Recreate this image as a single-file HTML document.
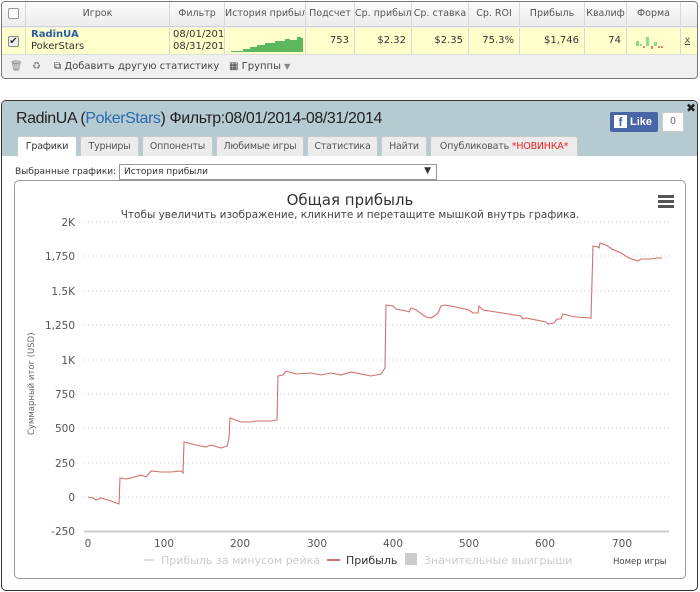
<!DOCTYPE html>
<html><head><meta charset="utf-8"><style>
*{box-sizing:border-box;margin:0;padding:0}
body{width:700px;height:592px;background:#fff;font-family:"Liberation Sans","DejaVu Sans",sans-serif;position:relative;overflow:hidden;font-size:11px;color:#333}
.top{position:absolute;left:1px;top:1px;width:697px;height:78px;border:1px solid #777;border-radius:4px;overflow:hidden;background:#f0f0f0}
.hdr{position:absolute;top:0;left:0;right:0;height:25px;background:linear-gradient(#fbfbfb,#ececec);border-bottom:1px solid #d0d0d0}
.row{position:absolute;top:26px;left:0;right:0;height:27px;background:#ffffcc;border-bottom:1px solid #ddd}
.c{position:absolute;top:0;height:100%;border-right:1px solid #d8d8d8;font-family:"DejaVu Sans",sans-serif;font-size:9.5px;color:#555;text-align:center;line-height:24px;white-space:nowrap;overflow:hidden}
.row .c{line-height:26px;font-size:10px;color:#333;text-align:right;padding-right:5px}
.tb{position:absolute;top:54px;left:0;right:0;height:24px;font-family:"DejaVu Sans",sans-serif;font-size:10px;color:#444}
.panel{position:absolute;left:1px;top:100px;width:697px;height:491px;border:1px solid #333;border-radius:5px;overflow:hidden;background:#fff}
.ph{position:absolute;left:0;top:0;right:0;height:55px;background:#b6cbd1}
.title{position:absolute;left:14px;top:9px;font-size:16px;color:#222;letter-spacing:-0.4px;font-family:"Liberation Sans",sans-serif}
.tab{position:absolute;top:35px;height:20px;background:#ececec;border:1px solid #c9c9c9;border-bottom:none;border-radius:3px 3px 0 0;font-family:"DejaVu Sans",sans-serif;font-size:9.5px;color:#555;text-align:center;line-height:19px;letter-spacing:-0.2px;white-space:nowrap;overflow:hidden}
.chart{position:absolute;left:12px;top:79px;width:672px;height:399px;border:1px solid #999;border-radius:5px}
</style></head><body>
<div class="top">
 <div class="hdr">
  <div class="c" style="left:0;width:24px"><div style="width:11px;height:11px;border:1px solid #999;border-radius:2px;margin:6px auto;background:#fff"></div></div>
  <div class="c" style="left:24px;width:144px">Игрок</div>
  <div class="c" style="left:168px;width:55px">Фильтр</div>
  <div class="c" style="left:223px;width:81px">История прибыль</div>
  <div class="c" style="left:304px;width:49px">Подсчет</div>
  <div class="c" style="left:353px;width:57px">Ср. прибыль</div>
  <div class="c" style="left:410px;width:57px">Ср. ставка</div>
  <div class="c" style="left:467px;width:51px">Ср. ROI</div>
  <div class="c" style="left:518px;width:65px">Прибыль</div>
  <div class="c" style="left:583px;width:42px">Квалиф</div>
  <div class="c" style="left:625px;width:54px">Форма</div>
 </div>
 <div class="row">
  <div class="c" style="left:0;width:24px;padding:0"><div style="width:11px;height:11px;border:1px solid #888;border-radius:2px;margin:8px auto;background:#eee;font-size:10px;line-height:9px;text-align:center">✔</div></div>
  <div class="c" style="left:24px;width:144px;text-align:left;padding-left:5px;line-height:12px;padding-top:1px"><b style="color:#2a5ea8">RadinUA</b><br>PokerStars</div>
  <div class="c" style="left:168px;width:55px;text-align:left;padding-left:3px;line-height:12px;padding-top:1px">08/01/201<br>08/31/201</div>
  <div class="c" style="left:223px;width:81px"><svg width="81" height="26" style="position:absolute;left:0;top:0"><path d="M6 23H18V21H25V19H32V17H40V15H50V13H60V11H65V12H72V9H76V10H78V24H6Z" fill="#5cb85c"/></svg></div>
  <div class="c" style="left:304px;width:49px">753</div>
  <div class="c" style="left:353px;width:57px">$2.32</div>
  <div class="c" style="left:410px;width:57px">$2.35</div>
  <div class="c" style="left:467px;width:51px">75.3%</div>
  <div class="c" style="left:518px;width:65px">$1,746</div>
  <div class="c" style="left:583px;width:42px">74</div>
  <div class="c" style="left:625px;width:54px"><svg width="54" height="26" style="position:absolute;left:0;top:0"><rect x="9" y="13" width="3" height="5" fill="#8d8"/><rect x="13" y="16" width="2" height="2" fill="#8d8"/><rect x="16" y="18" width="2" height="2" fill="#e77"/><rect x="19" y="9" width="3" height="9" fill="#8d8"/><rect x="24" y="18" width="2" height="3" fill="#e77"/><rect x="27" y="14" width="3" height="4" fill="#8d8"/><rect x="31" y="18" width="2" height="2" fill="#e77"/><rect x="34" y="18" width="2" height="2" fill="#e77"/></svg></div>
  <div style="position:absolute;left:683px;top:7px;font-size:10px;text-decoration:underline;color:#444">x</div>
 </div>
 <div class="tb">
  <span style="position:absolute;left:8px;top:5px;color:#888">🗑</span>
  <span style="position:absolute;left:30px;top:5px;color:#888">♻</span>
  <span style="position:absolute;left:52px;top:5px">⧉ Добавить другую статистику</span>
  <span style="position:absolute;left:227px;top:5px">▦ Группы <span style="color:#888;font-size:8px">▼</span></span>
 </div>
</div>
<div class="panel">
 <div class="ph">
  <div class="title">RadinUA (<span style="color:#2a6ab0">PokerStars</span>) Фильтр:08/01/2014-08/31/2014</div>
  <div style="position:absolute;left:608px;top:11px;width:48px;height:20px;background:#4865a8;border-radius:2px;color:#fff;font-weight:bold;font-size:11px;line-height:20px"><span style="display:inline-block;width:13px;height:13px;background:#fff;color:#4865a8;margin:3px 3px 0 4px;vertical-align:top;text-align:center;line-height:14px;font-size:12px">f</span>Like</div>
  <div style="position:absolute;left:660px;top:11px;width:22px;height:20px;background:#fff;border:1px solid #ccc;border-radius:2px;font-size:10px;text-align:center;line-height:18px;color:#666">0</div>
  <div style="position:absolute;left:684px;top:0;font-size:12px;font-weight:bold;color:#222">✖</div>
  <div class="tab" style="left:15px;width:60px;background:#fff;height:21px;color:#333">Графики</div>
  <div class="tab" style="left:78px;width:59px">Турниры</div>
  <div class="tab" style="left:140px;width:71px">Оппоненты</div>
  <div class="tab" style="left:214px;width:88px">Любимые игры</div>
  <div class="tab" style="left:305px;width:71px">Статистика</div>
  <div class="tab" style="left:379px;width:46px">Найти</div>
  <div class="tab" style="left:428px;width:148px">Опубликовать <span style="color:#e22">*НОВИНКА*</span></div>
 </div>
 <div style="position:absolute;left:13px;top:66px;font-family:'DejaVu Sans',sans-serif;font-size:9px;color:#333">Выбранные графики:</div>
 <div style="position:absolute;left:117px;top:63px;width:318px;height:16px;border:1px solid #999;background:#fff;font-family:'DejaVu Sans',sans-serif;font-size:9px;padding:2px 4px">История прибыли<span style="position:absolute;right:5px;top:1px;font-size:9px">▼</span></div>
 <div class="chart"></div>
 <svg width="697" height="491" style="position:absolute;left:0;top:0" font-family="DejaVu Sans, sans-serif">
  <text x="348" y="104" text-anchor="middle" font-size="15" fill="#333">Общая прибыль</text>
  <text x="348" y="117" text-anchor="middle" font-size="10.5" fill="#444">Чтобы увеличить изображение, кликните и перетащите мышкой внутрь графика.</text>
  <g fill="#555"><rect x="656" y="94" width="16" height="3"/><rect x="656" y="99" width="16" height="3"/><rect x="656" y="104" width="16" height="3"/></g>
  <g stroke="#ccc" stroke-dasharray="1,3">
   <path d="M82 121H667M82 155H667M82 190H667M82 224H667M82 259H667M82 293H667M82 327H667M82 362H667M82 396H667"/>
  </g>
  <path d="M82 430.5H667" stroke="#ccc" stroke-width="2"/>
  <g font-size="10.5" fill="#555" text-anchor="end">
   <text x="73" y="125">2K</text><text x="73" y="159">1,750</text><text x="73" y="194">1.5K</text><text x="73" y="228">1,250</text><text x="73" y="263">1K</text><text x="73" y="297">750</text><text x="73" y="331">500</text><text x="73" y="366">250</text><text x="73" y="400">0</text><text x="73" y="434">-250</text>
  </g>
  <g font-size="10.5" fill="#555" text-anchor="middle">
   <text x="86" y="446">0</text><text x="162" y="446">100</text><text x="238" y="446">200</text><text x="315" y="446">300</text><text x="391" y="446">400</text><text x="467" y="446">500</text><text x="543" y="446">600</text><text x="620" y="446">700</text>
  </g>
  <text transform="translate(32,334) rotate(-90)" font-size="8.5" fill="#666">Суммарный итог (USD)</text>
  <g font-size="11">
   <path d="M142 459H152" stroke="#ddd" stroke-width="2"/><text x="159" y="463" fill="#ccc">Прибыль за минусом рейка</text>
   <path d="M325 459H338" stroke="#d07070" stroke-width="2"/><text x="344" y="463" fill="#333">Прибыль</text>
   <rect x="403" y="452" width="12" height="12" fill="#ccc"/><text x="422" y="463" fill="#ccc">Значительные выигрыши</text>
  </g>
  <text x="611" y="463" font-size="8.5" fill="#444">Номер игры</text>
  <path fill="none" stroke="#d07070" stroke-width="1.1" transform="translate(-1,-100)" d="M87 496L92 497L95 499L100 497L110 500L118 503L119 477L125 478L130 477L140 474L145 476L150 470L160 471L170 471L180 470L182 472L183 441L195 444L205 446L210 444L220 447L226 445L228 437L229 417L240 421L250 421L255 420L270 420L276 419L277 375L282 374L285 370L295 373L310 372L320 374L330 372L340 374L350 371L370 375L380 373L384 367L385 304L392 305L395 308L405 310L408 311L410 307L415 309L425 316L430 317L435 314L437 312L440 305L444 304L455 306L468 309L472 312L477 312L478 305L482 309L495 311L520 315L522 318L525 317L545 321L547 323L553 322L556 318L560 318L562 313L566 314L570 315L575 316L590 317L592 245L597 246L598 247L599 242L605 244L611 248L620 252L628 257L637 260L640 258L650 258L656 257L661 257"/>
 </svg>
</div>
</body></html>
